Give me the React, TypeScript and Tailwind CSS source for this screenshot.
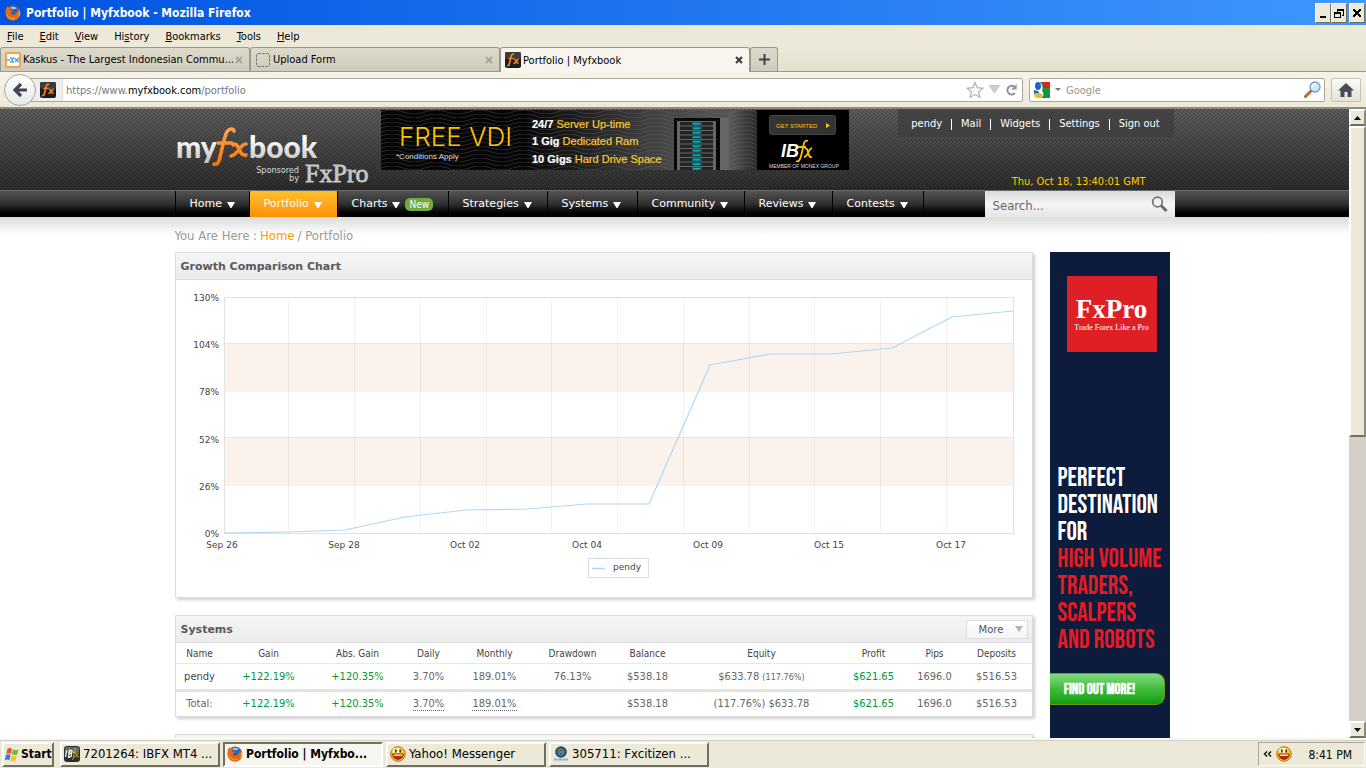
import type { ReactNode } from 'react';

const UI = "font-['DejaVu_Sans_Condensed','DejaVu_Sans',sans-serif]";

const navItems = [
  { label: 'Home', width: 'w-[74px]' },
  { label: 'Portfolio', width: 'w-[88px]', active: true },
  { label: 'Charts', width: 'w-[111px]', badge: 'New' },
  { label: 'Strategies', width: 'w-[99px]' },
  { label: 'Systems', width: 'w-[90px]' },
  { label: 'Community', width: 'w-[107px]' },
  { label: 'Reviews', width: 'w-[88px]' },
  { label: 'Contests', width: 'w-[91px]' },
];

const userLinks = ['pendy', 'Mail', 'Widgets', 'Settings', 'Sign out'];

const columns = [
  { label: 'Name', width: 'w-[48px]' },
  { label: 'Gain', width: 'w-[90px]' },
  { label: 'Abs. Gain', width: 'w-[88px]' },
  { label: 'Daily', width: 'w-[54px]' },
  { label: 'Monthly', width: 'w-[78px]' },
  { label: 'Drawdown', width: 'w-[78px]' },
  { label: 'Balance', width: 'w-[72px]' },
  { label: 'Equity', width: 'w-[156px]' },
  { label: 'Profit', width: 'w-[68px]' },
  { label: 'Pips', width: 'w-[54px]' },
  { label: 'Deposits', width: 'w-[70px]' },
];

const growth = [
  [48, 253], [112, 252], [169, 250], [229, 237], [290, 230], [351, 229], [411, 224],
  [473, 224], [534, 85], [594, 74], [655, 74], [716, 68], [776, 37], [837, 31],
];

const yTicks = ['130%', '104%', '78%', '52%', '26%', '0%'];

const xTicks = [
  { label: 'Sep 26', x: 46 },
  { label: 'Sep 28', x: 168 },
  { label: 'Oct 02', x: 289 },
  { label: 'Oct 04', x: 411 },
  { label: 'Oct 09', x: 532 },
  { label: 'Oct 15', x: 653 },
  { label: 'Oct 17', x: 775 },
];

function FirefoxIcon() {
  return (
    <svg width="16" height="16" viewBox="0 0 16 16" className="shrink-0">
      <circle cx="8" cy="8" r="7.500" fill="#d9590d" />
      <circle cx="8.600" cy="6.200" r="5.400" fill="#2b62b5" />
      <path d="M5.500 2.500c2-1.400 5-.8 6.500 1-1.500-.3-2 .8-3 .8s-2.500.2-3.500-1.800z" fill="#8fd0f2" />
      <path d="M1 3.500L2.400 1l.8 1.800c1.200-.6 2.500-.3 3.300.5-1 .5-1.300 1.200-1.200 2l2.500.4c0 1-1.500 1.300-1.900 2.200.3 1.900 2.700 2.200 4.300 1.200 1.600-.9 2.300-2.400 2.200-4.300 1.600 1.500 2.800 4 1.900 6.500-1 3-3.600 4.300-6.300 4.200C3.500 15.300.6 12.300.6 8.300.6 6.500.6 5 1 3.500z" fill="#e66a12" />
      <path d="M13.800 4.500c1.600 2.500 1.500 5.500-.2 7.800 0-1.900 1-4.500.2-7.800z" fill="#ffd24a" />
      <path d="M2 9.500c1 3.300 4.500 5 8 3.900" fill="none" stroke="#ffae34" strokeWidth="1" />
    </svg>
  );
}

function FxIcon() {
  return (
    <svg width="16" height="16" viewBox="0 0 16 16" className="shrink-0">
      <rect width="16" height="16" rx="2" fill="#1d1d1d" />
      <rect width="16" height="7" rx="2" fill="#3c3c3c" />
      <path d="M9 2.600C7.500 1.400 6.300 2.800 5.800 5.500L4.300 12c-.3 1.300-1 1.900-2.300 1.500M3.500 6.500h5M9 7.500c2.200-.8 2 4.300 4.500 3.700M13.800 7c-1.800 0-3 4.500-5.300 4.300" fill="none" stroke="#f58220" strokeWidth="1.700" />
    </svg>
  );
}

function SmileyIcon() {
  return (
    <svg width="16" height="16" viewBox="0 0 16 16" className="shrink-0">
      <circle cx="8" cy="8" r="7.300" fill="#fcc522" stroke="#b8730f" />
      <ellipse cx="7" cy="4.500" rx="4.500" ry="2.800" fill="#fff19b" />
      <path d="M5.800 3.500v3M10.200 3.500v3" stroke="#2d2106" strokeWidth="1.500" />
      <path d="M2.700 8h10.600c0 7-10.600 7-10.600 0z" fill="#c22a12" stroke="#541005" strokeWidth=".7" />
      <path d="M3.600 8.500h8.800v1.300H3.600z" fill="#fff" />
    </svg>
  );
}

function IbfxIcon() {
  return (
    <svg width="16" height="16" viewBox="0 0 16 16" className="shrink-0">
      <rect width="16" height="16" rx="3" fill="#2e2e2e" />
      <rect x="1" y="1" width="14" height="6" rx="2" fill="#6b6b6b" />
      <path d="M2.500 4.500L1.500 11M4.500 11l1-6.500h1.300c1.800 0 1.500 3-.5 3h-1 1c2 0 1.500 3.500-.6 3.500z" fill="none" stroke="#fff" strokeWidth="1.300" />
      <path d="M12 3c-2-.8-1.500 3-2.500 8.500C9.300 13 9 13.500 8 13.500M9 6.500h2.500M11 7.500c2 0 1.500 4 4 3.500M14.500 7c-1.500 0-2 4.500-4 4" fill="none" stroke="#e0b514" strokeWidth="1" />
    </svg>
  );
}

function CitizenIcon() {
  return (
    <svg width="16" height="16" viewBox="0 0 16 16" className="shrink-0">
      <circle cx="8" cy="6" r="5.800" fill="#3a444b" />
      <circle cx="8" cy="6" r="2.800" fill="none" stroke="#3d93b5" strokeWidth="1.500" />
      <path d="M6.500 6h3" stroke="#aac9d8" />
      <path d="M1 13.500h14" stroke="#7ba9dc" strokeWidth="2" strokeDasharray="2 .5" />
    </svg>
  );
}

function WindowButton({ label, children }: { label: string; children: ReactNode }) {
  return (
    <button aria-label={label} className="flex h-[20px] w-[16px] items-center justify-center border border-t-white border-l-white border-r-[#716f64] border-b-[#716f64] bg-[#ece9d8]">
      <svg width="12" height="14" viewBox="0 0 12 14" shapeRendering="crispEdges" className="shrink-0">{children}</svg>
    </button>
  );
}

function TitleBar() {
  return (
    <header className="flex h-[25px] shrink-0 items-center bg-linear-to-r from-[#0052e0] to-[#3f97ff] pl-[5px] pr-[1px]">
      <FirefoxIcon />
      <h1 className={`${UI} ml-[5px] flex-1 text-[12px] font-bold text-white`}>Portfolio | Myfxbook - Mozilla Firefox</h1>
      <WindowButton label="Minimize"><path d="M3 10h6v2H3z" /></WindowButton>
      <WindowButton label="Restore">
        <path d="M4 3h7v2H4zM10 5h1v5H9V9h1zM4 5h1v2H4zM1 6h7v2H1zM1 8h1v4H1zM7 8h1v4H7zM1 11h7v1H1z" />
      </WindowButton>
      <div className="w-[2px]" />
      <WindowButton label="Close"><path d="M2 3h2l2 3 2-3h2v1L7.500 7 10 10v1H8L6 8l-2 3H2v-1l2.500-3L2 4z" /></WindowButton>
    </header>
  );
}

function MenuBar() {
  const items = [['F', 'ile', ''], ['E', 'dit', ''], ['V', 'iew', ''], ['s', 'tory', 'Hi'], ['B', 'ookmarks', ''], ['T', 'ools', ''], ['H', 'elp', '']];
  return (
    <nav className={`${UI} flex h-[22px] shrink-0 items-center gap-[16px] bg-[#ece9d8] pt-[2px] pl-[7px] text-[11px] text-black`}>
      {items.map(([key, rest, before]) => (
        <button key={before + key + rest}>{before}<u>{key}</u>{rest}</button>
      ))}
    </nav>
  );
}

function TabClose({ dark }: { dark?: boolean }) {
  return (
    <button aria-label="Close tab" className={dark ? 'text-[#3a3a3a]' : 'text-[#a8a69b]'}>
      <svg width="8" height="8" viewBox="0 0 8 8"><path d="M1 1l6 6M7 1L1 7" stroke="currentColor" strokeWidth="2" /></svg>
    </button>
  );
}

function TabBar() {
  const tab = 'flex w-[250px] items-center rounded-t-[3px] border border-b-0 border-[#9b998c]';
  const idle = 'bg-linear-to-b from-[#dddacb] to-[#cfccbd]';
  return (
    <div className={`${UI} flex h-[25px] shrink-0 items-stretch border-b border-[#9b998c] bg-linear-to-b from-[#ece9d8] to-[#e2dfce] text-[11px] text-black`}>
      <div className={`${tab} ${idle} pl-[4px] pr-[6px]`}>
        <svg width="16" height="16" viewBox="0 0 16 16" className="shrink-0">
          <rect x="1" y="1" width="14" height="14" rx="1" fill="#fff" stroke="#f7a23e" strokeWidth="2" />
          <path d="M2 8h3M5 6c3-1 3 5 0 4M9 6c-3 0-2 5 0 4M9 6l5 4M14 6l-4 4" fill="none" stroke="#54a9d8" strokeWidth="1.500" />
        </svg>
        <span className="ml-[2px] flex-1 pt-[2px] whitespace-nowrap">Kaskus - The Largest Indonesian Commu...</span>
        <TabClose />
      </div>
      <div className={`${tab} ${idle} pl-[5px] pr-[6px]`}>
        <svg width="14" height="14" viewBox="0 0 14 14" className="shrink-0">
          <rect x=".5" y=".5" width="13" height="13" rx="1.500" fill="none" stroke="#777" strokeDasharray="3 1" />
        </svg>
        <span className="ml-[3px] flex-1 pt-[2px]">Upload Form</span>
        <TabClose />
      </div>
      <div className={`${tab} -mb-px bg-[#f7f5ee] pl-[4px] pr-[6px]`}>
        <FxIcon />
        <span className="ml-[2px] flex-1 pt-[2px]">Portfolio | Myfxbook</span>
        <TabClose dark />
      </div>
      <button aria-label="New tab" className={`flex w-[28px] items-center justify-center rounded-t-[3px] border border-b-0 border-[#9b998c] ${idle}`}>
        <svg width="11" height="11" viewBox="0 0 11 11"><path d="M5.500 0v11M0 5.500h11" stroke="#3c4450" strokeWidth="2" /></svg>
      </button>
    </div>
  );
}

function AddressBar() {
  return (
    <div className={`${UI} flex h-[37px] shrink-0 items-center border-b-2 border-[#8d8b7d] bg-linear-to-b from-[#f6f4ea] to-[#ece9d8] pl-[4px] pr-[5px] text-[11px]`}>
      <button aria-label="Back" className="z-10 -mr-[10px] flex h-[32px] w-[32px] shrink-0 items-center justify-center rounded-full border border-[#aaa89b] bg-linear-to-b from-white to-[#e8e8e6]">
        <svg width="16" height="16" viewBox="0 0 16 16"><path d="M9 2L3 8l6 6M3 8h12" fill="none" stroke="#3f4753" strokeWidth="3.200" /></svg>
      </button>
      <div className="flex h-[24px] flex-1 items-center rounded-[2px] border border-[#aca899] bg-white">
        <div className="flex h-full w-[36px] items-center justify-end border-r border-[#ddd] bg-[#eee] pr-[6px]"><FxIcon /></div>
        <a href="https://www.myfxbook.com/portfolio" className="ml-[3px] flex-1 pt-[3px] text-[#777]">https://www.<span className="text-black">myfxbook.com</span>/portfolio</a>
        <button aria-label="Bookmark">
          <svg width="18" height="18" viewBox="0 0 18 18"><path d="M9 1.500l2.300 5.100 5.500.6-4.100 3.700 1.200 5.500L9 13.600l-4.900 2.800 1.200-5.500-4.100-3.700 5.500-.6z" fill="#f6f6f6" stroke="#aeb2b8" strokeWidth="1.200" /></svg>
        </button>
        <button aria-label="History" className="mx-[5px]">
          <svg width="11" height="9" viewBox="0 0 11 9"><path d="M.5.500h10L5.500 8z" fill="#cdd1d7" stroke="#bcc1c9" /></svg>
        </button>
        <button aria-label="Reload" className="mr-[4px]">
          <svg width="13" height="12" viewBox="0 0 15 14"><path d="M11.500 10.500A5 5 0 1 1 10.500 3" fill="none" stroke="#8a93a0" strokeWidth="2.400" /><path d="M13.500 0v6.500H7z" fill="#8a93a0" /></svg>
        </button>
      </div>
      <form className="ml-[6px] flex h-[24px] w-[296px] items-center rounded-[2px] border border-[#aca899] bg-white pl-[4px] pr-[3px]">
        <svg width="16" height="16" viewBox="0 0 16 16" className="shrink-0">
          <path d="M6 0h10v16H7c3-2 3-5 1-7 1-2 1-6-2-9z" fill="#109a3d" />
          <path d="M8 0h8v6H9c1-2 0-4-1-6z" fill="#e62117" />
          <path d="M0 11h4l3 1-1 1H0z" fill="#dfeafc" />
          <ellipse cx="4" cy="4" rx="3" ry="4" fill="#1c62cc" />
          <path d="M0 8l4 1 2 3-3-1-3 1z" fill="#1c62cc" />
          <ellipse cx="4.300" cy="13.500" rx="4" ry="2.400" fill="#f6b713" />
        </svg>
        <svg width="6" height="3" viewBox="0 0 6 3" className="mx-[5px] shrink-0"><path d="M0 0h6L3 3z" fill="#777" /></svg>
        <input aria-label="Search with Google" placeholder="Google" className="min-w-0 flex-1 pt-[3px] outline-none placeholder:text-[#98968a]" />
        <button type="button" aria-label="Search">
          <svg width="17" height="17" viewBox="0 0 17 17">
            <path d="M1.500 15.500L7 10" stroke="#bd6a2c" strokeWidth="3" strokeLinecap="round" />
            <circle cx="11" cy="6" r="5" fill="#cfe9fb" stroke="#6e9dd0" strokeWidth="1.300" />
            <path d="M8 5.500c.3-1.700 2-2.500 3.500-2" fill="none" stroke="#fff" strokeWidth="1.500" />
          </svg>
        </button>
      </form>
      <button aria-label="Home" className="ml-[6px] flex h-[24px] w-[30px] items-center justify-center rounded-[2px] border border-[#c3c1b3] bg-linear-to-b from-[#fbfbf8] to-[#e4e2d7]">
        <svg width="16" height="14" viewBox="0 0 16 14"><path d="M8 0l8 7.500h-2.500V14h-4V9h-3v5h-4V7.500H0L8 0z" fill="#454d59" /></svg>
      </button>
    </div>
  );
}

function SiteLogo() {
  return (
    <svg width="206" height="80" viewBox="0 0 206 80" role="img" aria-label="myfxbook" className="shrink-0">
      <defs>
        <linearGradient id="silver" x1="0" y1="0" x2="0" y2="1">
          <stop offset=".3" stopColor="#fff" />
          <stop offset="1" stopColor="#bdbdbd" />
        </linearGradient>
        <linearGradient id="flame" gradientUnits="userSpaceOnUse" x1="0" y1="18" x2="0" y2="56">
          <stop offset="0" stopColor="#ffa64d" />
          <stop offset="1" stopColor="#ff7800" />
        </linearGradient>
      </defs>
      <g fill="url(#silver)" className="font-['Lato',sans-serif] text-[30px] font-black">
        <text x="1" y="49">my</text>
        <text x="74" y="49">book</text>
      </g>
      <path d="M59 22c-1-3-6-3-8 3-2 5-4 15-6 23-1 6-3 8-6 7M43 34h14" fill="none" stroke="url(#flame)" strokeWidth="3.500" strokeLinecap="round" />
      <path d="M58 36c7-4 5 12 13 10M71 35c-6 0-8 11-15 12" fill="none" stroke="url(#flame)" strokeWidth="3.500" strokeLinecap="round" />
      <g fill="#ddd" textAnchor="end" className="font-['DejaVu_Sans_Condensed','DejaVu_Sans',sans-serif] text-[9px]">
        <text x="124" y="64">Sponsored</text>
        <text x="124" y="72">by</text>
      </g>
      <text x="130" y="73" fill="#c6c6c6" stroke="#c6c6c6" strokeWidth=".8" className="font-['Liberation_Serif',serif] text-[26px]">FxPro</text>
    </svg>
  );
}

function VdiBanner() {
  const slots = [0, 1, 2, 3, 4, 5, 6, 7, 8, 9, 10];
  return (
    <a href="#vdi" className="mt-[1px] h-[60px] w-[468px] shrink-0">
      <svg width="468" height="60" viewBox="0 0 468 60" role="img" aria-label="Free VDI offer">
        <defs>
          <pattern id="waves" width="44" height="4" patternUnits="userSpaceOnUse">
            <path d="M0 2q11-4 22 0t22 0" fill="none" stroke="#777" strokeOpacity=".3" />
          </pattern>
          <linearGradient id="sheen">
            <stop offset=".3" stopColor="#050505" />
            <stop offset=".6" stopColor="#444" />
            <stop offset=".75" stopColor="#555" />
            <stop offset=".81" stopColor="#222" />
          </linearGradient>
        </defs>
        <rect width="468" height="60" fill="url(#sheen)" />
        <rect width="468" height="60" fill="url(#waves)" />
        <text x="18" y="36" fill="#fdc300" className="font-['Inter',sans-serif] text-[26px] font-light">FREE VDI</text>
        <text x="15" y="49" fill="#ddd" className="font-['Liberation_Sans',sans-serif] text-[8px]">*Conditions Apply</text>
        <g fill="#fdc82f" stroke="#fdc82f" strokeWidth=".2" className="font-['Liberation_Sans',sans-serif] text-[11px]">
          <text x="151" y="18"><tspan fill="#fff" stroke="#fff" fontWeight="700">24/7</tspan> Server Up-time</text>
          <text x="151" y="35"><tspan fill="#fff" stroke="#fff" fontWeight="700">1 Gig</tspan> Dedicated Ram</text>
          <text x="151" y="53"><tspan fill="#fff" stroke="#fff" fontWeight="700">10 Gigs</tspan> Hard Drive Space</text>
        </g>
        <rect x="339" y="8" width="9" height="52" fill="#666" />
        <rect x="293" y="8" width="46" height="52" fill="#080808" />
        <rect x="296" y="11" width="39" height="49" fill="#666" />
        {slots.map((i) => (
          <g key={i}>
            <rect x="299" y={12 + i * 4.500} width="33" height="3.500" fill="#242424" />
            <rect x="311" y={12 + i * 4.500} width="10" height="3" fill="#075e66" />
            <rect x="312" y={13 + i * 4.500} width="7" height="1.500" fill="#00b4bc" />
          </g>
        ))}
        <rect x="376" width="92" height="60" fill="#000" />
        <rect x="388.500" y="5.500" width="66" height="19" rx="2" fill="#333" stroke="#444" />
        <text x="395" y="18" fill="#fdc300" className="font-['Liberation_Sans',sans-serif] text-[6px]">GET STARTED</text>
        <path d="M445 13v5l4-2.500z" fill="#fdc300" />
        <text x="400" y="47" fill="#fff" className="font-['Liberation_Sans',sans-serif] text-[18px] font-bold italic">IB</text>
        <path d="M427 31c-5-2-4 5-7 15-1 5-3 6-5 5M417 37h8M424 39c4-3 2 10 7 8M431 38c-4 1-4 9-8 9" fill="none" stroke="#fdc300" strokeWidth="1.800" />
        <text x="388" y="58" fill="#ddd" className="font-['Liberation_Sans',sans-serif] text-[5px]">MEMBER OF MONEX GROUP</text>
      </svg>
    </a>
  );
}

function SiteHeader() {
  return (
    <div className="bg-[linear-gradient(135deg,rgba(0,0,0,0.22)_25%,transparent_25%,transparent_50%,rgba(0,0,0,0.22)_50%,rgba(0,0,0,0.22)_75%,transparent_75%),linear-gradient(to_bottom,#606060,#2e2e2e)] bg-[size:4px_4px,100%_100%]">
      <div className="mx-auto flex h-[81px] max-w-[1000px]">
        <SiteLogo />
        <VdiBanner />
        <div className={`${UI} ml-auto flex w-[277px] flex-col items-end justify-between pr-[1px] text-[11px]`}>
          <ul className="flex h-[28px] w-full items-center justify-center bg-[#3f3f3f]/80 pt-[3px] text-white">
            {userLinks.map((link, i) => (
              <li key={link} className={i > 0 ? 'flex items-center before:mx-[9px] before:h-[11px] before:w-px before:bg-white' : 'flex'}>
                <a href={`#${link}`}>{link}</a>
              </li>
            ))}
          </ul>
          <time className="pr-[28px] text-[#fc0]">Thu, Oct 18, 13:40:01 GMT</time>
        </div>
      </div>
    </div>
  );
}

function SiteNav() {
  return (
    <nav className="border-t border-[#6a6a6a] bg-linear-to-b from-[#535353] via-[#303030] to-black">
      <div className="mx-auto flex h-[26px] max-w-[1000px] items-stretch font-['DejaVu_Sans',sans-serif] text-[11px] text-white">
        <ul className="flex border-l border-black">
          {navItems.map((item) => (
            <li key={item.label} className={`${item.width} border-r border-black ${item.active ? 'bg-linear-to-b from-[#ffc02c] to-[#f99100]' : ''}`}>
              <a href={`#${item.label}`} className="flex h-full items-center pt-px pl-[14px]">
                {item.label}
                <svg width="8" height="6" viewBox="0 0 8 6" className="ml-[5px]"><path d="M0 0h8L4.500 6h-1z" fill="#fff" /></svg>
                {item.badge && (
                  <span className={`${UI} ml-[5px] h-[13px] rounded-[5px] bg-[#74a93c] px-[4px] text-[10px] leading-[13px]`}>{item.badge}</span>
                )}
              </a>
            </li>
          ))}
        </ul>
        <form className="ml-auto flex w-[190px] items-center bg-linear-to-b from-[#d9d9d9] via-[#f5f5f5] to-[#e6e6e6] pl-[8px] pr-[7px]">
          <input aria-label="Search" placeholder="Search..." className={`${UI} min-w-0 flex-1 pt-[3px] text-[13px] outline-none placeholder:text-[#666]`} />
          <button type="button" aria-label="Search site">
            <svg width="17" height="17" viewBox="0 0 17 17"><circle cx="6.500" cy="6" r="4.800" fill="none" stroke="#777" strokeWidth="1.800" /><path d="M10 9.500l5.500 5.500" stroke="#666" strokeWidth="2.800" /></svg>
          </button>
        </form>
      </div>
    </nav>
  );
}

function Panel({ title, action, children }: { title: string; action?: ReactNode; children: ReactNode }) {
  return (
    <section className="border border-[#dcdcdc] bg-white shadow-[2px_2px_3px_#cfcfcf]">
      <div className="flex h-[27px] items-center justify-between border-b border-[#dcdcdc] bg-linear-to-b from-[#f6f6f6] to-[#ebebeb] pl-[5px] pr-[4px]">
        <h2 className="pt-[2px] font-['DejaVu_Sans',sans-serif] text-[11px] font-bold text-[#5a5a5a]">{title}</h2>
        {action}
      </div>
      {children}
    </section>
  );
}

function GrowthChart() {
  return (
    <svg viewBox="0 0 856 317" className="block w-full" role="img" aria-label="Growth comparison chart">
      <rect x="48" y="63" width="789" height="48" fill="#faf2eb" />
      <rect x="48" y="157" width="789" height="48" fill="#faf2eb" />
      <g stroke="#000" strokeOpacity=".05" shapeRendering="crispEdges">
        {[1, 2, 3, 4, 5, 6, 7, 8, 9, 10, 11].map((i) => (
          <path key={i} d={`M${Math.floor(48 + i * 65.750) - 0.500} 17v236`} />
        ))}
        {[63, 111, 157, 205].map((y) => <path key={y} d={`M48 ${y + 0.500}h789`} />)}
      </g>
      <rect x="48.500" y="17.500" width="789" height="236" fill="none" stroke="#e2e2e2" />
      <polyline points={growth.map((p) => p.join(',')).join(' ')} fill="none" stroke="#afd8f8" strokeWidth="1.200" />
      <g fill="#444" className="font-['DejaVu_Sans',sans-serif] text-[9px]">
        {yTicks.map((label, i) => <text key={label} x="43" y={Math.round(21 + i * 47.200)} textAnchor="end">{label}</text>)}
        {xTicks.map((tick) => <text key={tick.label} x={tick.x} y="268" textAnchor="middle">{tick.label}</text>)}
        <text x="437" y="290">pendy</text>
      </g>
      <rect x="412.500" y="278.500" width="60" height="19" fill="none" stroke="#ddd" />
      <path d="M416 288.500h13" stroke="#afd8f8" strokeWidth="1.500" />
    </svg>
  );
}

function SystemsTable() {
  return (
    <table className={`${UI} w-full table-fixed border-collapse text-center text-[11px] text-[#666]`}>
      <thead>
        <tr className="h-[20px] border-b border-[#e8e8e8] text-[10px] text-[#444]">
          {columns.map((col) => <th key={col.label} className={`${col.width} p-0 pt-px font-normal whitespace-nowrap`}>{col.label}</th>)}
        </tr>
      </thead>
      <tbody>
        <tr className="h-[27px] border-b-3 border-[#e2e2e2] *:pt-[2px]">
          <td className="text-[#444]"><a href="#pendy">pendy</a></td>
          <td className="text-[#009933]">+122.19%</td>
          <td className="text-[#009933]">+120.35%</td>
          <td>3.70%</td>
          <td>189.01%</td>
          <td>76.13%</td>
          <td>$538.18</td>
          <td>$633.78 <span className="text-[9px]">(117.76%)</span></td>
          <td className="text-[#009933]">$621.65</td>
          <td>1696.0</td>
          <td>$516.53</td>
        </tr>
        <tr className="h-[26px]">
          <td>Total:</td>
          <td className="text-[#009933]">+122.19%</td>
          <td className="text-[#009933]">+120.35%</td>
          <td><span className="border-b border-dotted border-[#666]">3.70%</span></td>
          <td><span className="border-b border-dotted border-[#666]">189.01%</span></td>
          <td />
          <td>$538.18</td>
          <td>(117.76%) $633.78</td>
          <td className="text-[#009933]">$621.65</td>
          <td>1696.0</td>
          <td>$516.53</td>
        </tr>
      </tbody>
    </table>
  );
}

function SideAd() {
  return (
    <aside className="h-[600px] w-[120px] shrink-0 bg-[#0d1c3c] pt-[24px] text-white">
      <div className="ml-[17px] flex h-[76px] w-[90px] flex-col items-center bg-[#df1f26] pt-[19px] font-['Liberation_Serif',serif]">
        <span className="text-[27px] leading-[28px] font-bold">FxPro</span>
        <span className="text-[8px] leading-[10px] whitespace-nowrap">Trade Forex Like a Pro</span>
      </div>
      <p className="mt-[113px] ml-[8px] font-['Bebas_Neue','Roboto_Condensed',sans-serif] text-[26px] leading-[27px] whitespace-nowrap">
        PERFECT<br />DESTINATION<br />FOR<br />
        <span className="text-[#e51b24]">HIGH VOLUME<br />TRADERS,<br />SCALPERS<br />AND ROBOTS</span>
      </p>
      <button className="mt-[19px] h-[32px] w-[115px] rounded-r-[9px] border border-l-0 border-[#6b9a10] bg-linear-to-b from-[#7fdb7c] via-[#3fbb3b] to-[#0b9d0d] pt-[3px] pr-[14px] font-['Bebas_Neue','Roboto_Condensed',sans-serif] text-[15px] font-bold whitespace-nowrap">
        FIND OUT MORE!
      </button>
    </aside>
  );
}

function Scrollbar() {
  const raised = 'border-2 border-t-white border-l-white border-r-[#8d8b7d] border-b-[#716f64] bg-[#ece9d8]';
  return (
    <div className="flex w-[17px] shrink-0 flex-col bg-[#d4d0c8]">
      <button aria-label="Scroll up" className={`${raised} flex h-[17px] items-center justify-center`}>
        <svg width="7" height="4" viewBox="0 0 7 4"><path d="M3.500 0L7 4H0z" /></svg>
      </button>
      <div className={`${raised} h-[311px]`} />
      <button aria-label="Scroll down" className={`${raised} mt-auto flex h-[17px] items-center justify-center`}>
        <svg width="7" height="4" viewBox="0 0 7 4"><path d="M0 0h7L3.500 4z" /></svg>
      </button>
    </div>
  );
}

function TaskButton({ icon, label, active }: { icon: ReactNode; label: string; active?: boolean }) {
  const look = active
    ? 'border-t-[#716f64] border-l-[#716f64] border-r-white border-b-white bg-[#f6f5ee] text-[12px] font-bold'
    : 'border-t-white border-l-white border-r-[#716f64] border-b-[#716f64] bg-[#ece9d8] text-[13px]';
  return (
    <button className={`${look} flex h-[25px] w-[160px] items-center gap-[3px] border-2 pl-[2px] text-left`}>
      {icon}
      <span className="whitespace-nowrap">{label}</span>
    </button>
  );
}

function Taskbar() {
  return (
    <footer className={`${UI} flex h-[30px] shrink-0 items-center gap-[3px] border-t-2 border-[#f8f7f0] bg-[#ece9d8] pl-[2px] pr-[1px] text-black shadow-[inset_0_1px_0_#d4d0c8]`}>
      <button className="mr-[3px] flex h-[25px] w-[52px] items-center gap-[1px] border-2 border-t-white border-l-white border-r-[#716f64] border-b-[#716f64] text-[12px] font-bold">
        <svg width="16" height="15" viewBox="0 0 16 15" className="shrink-0">
          <path d="M3.500 2C5 .8 6.500.8 8 1.800L6.800 7C5.300 6 4 6 2.300 7z" fill="#e6532a" />
          <path d="M9 2.200c1.700 1 3.200 1 5.500.2L13.200 7.500c-2 .9-3.700.7-5.300-.2z" fill="#7cb832" />
          <path d="M2 8c1.700-1 3-1 4.600 0L5.300 13.200c-1.600-1-3-1-4.600 0z" fill="#3c78d8" />
          <path d="M7.600 8.400c1.600.9 3.300 1.100 5.300.2l-1.300 5c-2 .9-3.700.7-5.300-.2z" fill="#f7c427" />
        </svg>
        Start
      </button>
      <TaskButton icon={<IbfxIcon />} label="7201264: IBFX MT4 ..." />
      <TaskButton icon={<FirefoxIcon />} label="Portfolio | Myfxbo..." active />
      <TaskButton icon={<SmileyIcon />} label="Yahoo! Messenger" />
      <TaskButton icon={<CitizenIcon />} label="305711: Fxcitizen ..." />
      <div className="ml-auto flex h-[24px] w-[107px] items-center border border-t-[#aca899] border-l-[#aca899] border-r-white border-b-white pl-[4px] pr-[12px] text-[12px]">
        <svg width="9" height="6" viewBox="0 0 9 6" className="mr-[4px]"><path d="M4 .5L1.500 3 4 5.500M8 .5L5.500 3 8 5.500" fill="none" stroke="#000" strokeWidth="1.300" /></svg>
        <SmileyIcon />
        <time className="ml-auto pt-[2px] whitespace-nowrap">8:41 PM</time>
      </div>
    </footer>
  );
}

export default function App() {
  return (
    <div className="flex h-screen flex-col overflow-hidden bg-white">
      <TitleBar />
      <MenuBar />
      <TabBar />
      <AddressBar />
      <div className="flex min-h-0 flex-1">
        <main className="min-w-0 flex-1 overflow-hidden bg-white">
          <SiteHeader />
          <SiteNav />
          <div className="bg-linear-to-b from-[#dcdcdc] to-white to-[18px]">
            <div className="mx-auto max-w-[1000px]">
              <p className={`${UI} flex h-[35px] items-center gap-[3px] pt-[2px] text-[13px] text-[#999]`}>
                You Are Here : <a href="#home" className="text-[#f90]">Home</a> / Portfolio
              </p>
              <div className="flex items-start gap-[17px]">
                <div className="flex w-[858px] flex-col gap-[17px]">
                  <Panel title="Growth Comparison Chart"><GrowthChart /></Panel>
                  <Panel
                    title="Systems"
                    action={
                      <button className="flex h-[19px] w-[62px] items-center justify-between border border-[#ddd] bg-linear-to-b from-white to-[#f4f4f4] pl-[12px] pr-[4px] font-['DejaVu_Sans',sans-serif] text-[10px] text-[#555]">
                        More
                        <svg width="8" height="6" viewBox="0 0 8 6"><path d="M0 0h8L4 6z" fill="#b5b5b5" /></svg>
                      </button>
                    }
                  >
                    <SystemsTable />
                  </Panel>
                  <Panel title=""><div className="h-[60px]" /></Panel>
                </div>
                <SideAd />
              </div>
            </div>
          </div>
        </main>
        <Scrollbar />
      </div>
      <Taskbar />
    </div>
  );
}
